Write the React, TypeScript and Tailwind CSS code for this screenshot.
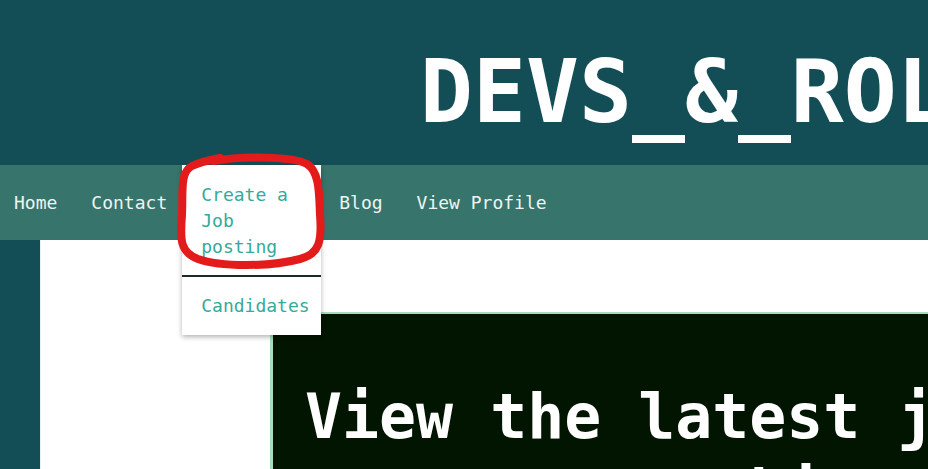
import React from "react";

export default function App() {
  return (
    <div className="relative w-[928px] h-[469px] overflow-hidden bg-[#134e57] font-['DejaVu_Sans_Mono',monospace]">
      <header className="h-[165px] bg-[#134e57] pl-[420px] pt-[48px] whitespace-nowrap">
        <h1 className="text-[88px] leading-[88px] font-bold text-white">DEVS_&amp;_ROLES</h1>
      </header>
      <nav className="h-[75px] bg-[#37746c] flex items-stretch text-[18px] text-[#eef5f3] whitespace-nowrap">
        <a className="flex items-center pl-[14px] pr-[17px]">Home</a>
        <a className="flex items-center pl-[17px] pr-[15px]">Contact</a>
        <div className="relative w-[139px] flex items-center pl-[19px]">
          <span>Jobs</span>
          <div className="absolute top-0 left-0 w-[139px] bg-white shadow-[0_2px_5px_rgba(0,0,0,0.3)] z-10 whitespace-normal text-[#35aa9b] leading-[26px]">
            <div className="pt-[17px] pb-[15px] pl-[19px] pr-[10px]">Create a Job posting</div>
            <div className="border-t-2 border-[#1b2a24] pt-[16px] pb-[16px] pl-[19px] pr-[10px]">Candidates</div>
          </div>
        </div>
        <a className="flex items-center pl-[18px] pr-[17px]">Blog</a>
        <a className="flex items-center pl-[17px] pr-[17px]">View Profile</a>
      </nav>
      <div className="flex h-[229px]">
        <div className="w-[40px] shrink-0" />
        <main className="flex-1 bg-white border-l border-[#e4f3f5] pt-[72px] pl-[229px] overflow-hidden">
          <section className="h-full w-[900px] bg-[#021500] border-t-2 border-l-[3px] border-[#a9dcbc] pt-[65px] pl-[32px] whitespace-nowrap">
            <p className="text-[61.5px] leading-[76px] font-bold text-white">View the latest jobs</p>
            <p className="text-[61.5px] leading-[76px] font-bold text-white">our newest ships</p>
          </section>
        </main>
      </div>
      <svg className="absolute top-0 left-0 pointer-events-none z-20" width="928" height="469" viewBox="0 0 928 469">
        <path
          d="M 214 161 C 240 156, 292 156, 307 164 C 320 172, 319 195, 320 215 C 322 240, 320 254, 300 259 C 270 267, 220 267, 198 259 C 180 252, 180 240, 182 215 C 183 190, 180 172, 192 166 C 200 162, 210 160, 220 158"
          fill="none"
          stroke="#e31b1b"
          strokeWidth="8"
          strokeLinecap="round"
          strokeLinejoin="round"
        />
      </svg>
    </div>
  );
}
